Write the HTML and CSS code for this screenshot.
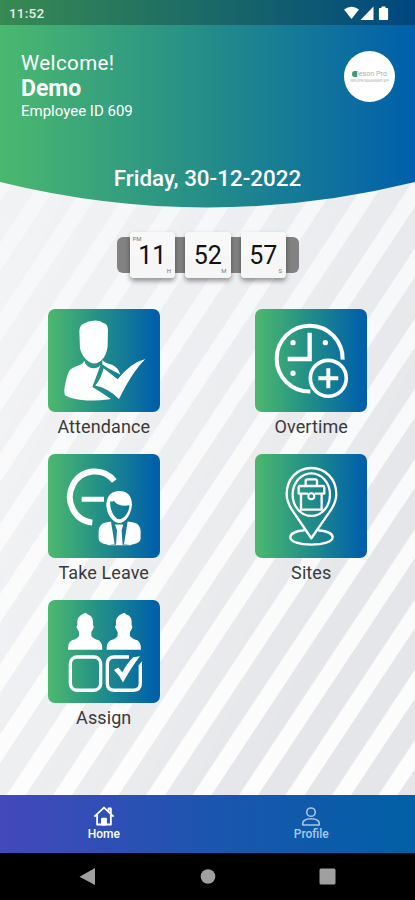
FILE: index.html
```html
<!DOCTYPE html>
<html lang="en">
<head>
<meta charset="utf-8">
<title>Home</title>
<link rel="stylesheet" href="styles.css">
</head>
<body>
<div class="app">
  <svg class="stripes" viewBox="0 0 415 795" aria-hidden="true">
    <defs>
      <pattern id="stripe" width="46.5" height="10" patternUnits="userSpaceOnUse" patternTransform="translate(26.2 794) skewX(-33.5)">
        <rect width="27.5" height="10" fill="#e4e6e9"/>
      </pattern>
      <linearGradient id="fade" x1="0" y1="0" x2="1" y2="1">
        <stop offset=".2" stop-color="#fff" stop-opacity=".3"/>
        <stop offset=".5" stop-color="#fff" stop-opacity=".6"/>
        <stop offset=".8" stop-color="#fff" stop-opacity="1"/>
      </linearGradient>
      <mask id="fadeMask"><rect width="415" height="795" fill="url(#fade)"/></mask>
      <linearGradient id="base" x1="0" y1="0" x2="0" y2="1">
        <stop offset=".25" stop-color="#f6f7f9"/>
        <stop offset="1" stop-color="#fdfdfd"/>
      </linearGradient>
    </defs>
    <rect width="415" height="795" fill="url(#base)"/>
    <rect width="415" height="795" fill="url(#stripe)" mask="url(#fadeMask)"/>
  </svg>

  <header class="header">
    <svg class="header-shape" viewBox="0 0 415 208" aria-hidden="true">
      <defs>
        <linearGradient id="head" x1="0" y1="0" x2="1" y2="0">
          <stop offset="0" stop-color="#4bb86e"/>
          <stop offset=".5" stop-color="#248d89"/>
          <stop offset="1" stop-color="#005fab"/>
        </linearGradient>
      </defs>
      <path d="M0 0H415V182Q208 233 0 182Z" fill="url(#head)"/>
    </svg>
    <div class="status">
      <span class="status-time">11:52</span>
      <svg class="status-icons" viewBox="0 0 45 15" fill="#fff" aria-hidden="true">
        <path d="M0 3.600Q7.500-2.200 15 3.600L7.500 13Z"/>
        <path d="M29.500 .6V14H16.500Z"/>
        <path d="M37.500 .5h4v1.400h1.600q1 0 1 1V13q0 1-1 1h-7.200q-1 0-1-1V2.900q0-1 1-1h1.600z"/>
      </svg>
    </div>
    <div class="intro">
      <div class="greeting">
        <div class="welcome">Welcome!</div>
        <div class="name">Demo</div>
        <div class="employee">Employee ID 609</div>
      </div>
      <div class="avatar">
        <div class="brand"><i class="brand-mark"></i>leson Pro</div>
        <div class="brand-sub">EMPLOYEE MANAGEMENT APP</div>
      </div>
    </div>
    <div class="date">Friday, 30-12-2022</div>
  </header>

  <div class="clock">
    <div class="digit"><small class="period">PM</small>11<small class="unit">H</small></div>
    <div class="digit">52<small class="unit">M</small></div>
    <div class="digit">57<small class="unit">S</small></div>
  </div>

  <main class="grid">
    <div class="item">
      <svg class="tile" viewBox="24 25 337 311" fill="#fff" aria-hidden="true">
        <path d="M161 60Q180 59 190 67Q204 70 204 88L203 138Q199 166 183 180Q163 196 145 182Q127 168 120 144L118 91Q119 72 134 68Q146 59 161 60Z"/>
        <path d="M133 180Q138 201 161 203Q176 202 182 192L157 259Q183 274 213 295Q184 300 140 300Q96 297 75 284Q70 270 77 245Q82 218 91 207Q99 199 121 192Q130 189 133 180Z"/>
        <path d="M187 178Q194 187 216 192Q236 201 241 222L203 202L187 191Z"/>
        <path d="M191 203L233 236Q271 187 316 175Q277 213 237 295Q204 263 166 255Q183 235 191 203Z"/>
      </svg>
      <span class="label">Attendance</span>
    </div>
    <div class="item">
      <svg class="tile" viewBox="22 25 337 311" fill="none" stroke="#fff" aria-hidden="true">
        <path d="M188 273A99 99 0 1 1 285 177" stroke-width="12"/>
        <path d="M186 96V175H120" stroke-width="13"/>
        <circle cx="242" cy="233" r="54" stroke-width="11"/>
        <path d="M242 203V263M212 233H272" stroke-width="12"/>
        <g fill="#fff" stroke="none"><circle cx="136" cy="126" r="8"/><circle cx="233" cy="126" r="8"/><circle cx="136" cy="218" r="8"/></g>
      </svg>
      <span class="label">Overtime</span>
    </div>
    <div class="item">
      <svg class="tile" viewBox="24 17 337 311" fill="#fff" aria-hidden="true">
        <path d="M223 98A75 77 0 1 0 157 223" fill="none" stroke="#fff" stroke-width="18"/>
        <path d="M125 145H192V160H125Z"/>
        <path fill-rule="evenodd" d="M238 128C264 128 276 145 276 170C274 197 257 224 238 224C218 224 200 197 199 170C200 143 214 128 238 128ZM211 158C207 184 225 213 238 213C252 213 269 190 268 171Q236 176 221 157Q216 162 211 158Z"/>
        <path d="M213 220L224 288H196Q176 284 176 271V247Q178 228 197 223Z"/>
        <path d="M263 220L252 288H281Q302 284 302 271V247Q300 228 281 223Z"/>
        <path d="M225 229H250L245 246L248 290H228L231 246Z"/>
        <path d="M196 286Q238 294 281 286L272 291H206Z"/>
      </svg>
      <span class="label">Take Leave</span>
    </div>
    <div class="item">
      <svg class="tile" viewBox="22 17 337 311" fill="none" stroke="#fff" stroke-width="7" stroke-linejoin="round" aria-hidden="true">
        <path d="M191 270L132 183Q117 159 117 137C117 92 149 59 191 59S266 92 266 137Q266 159 251 183Z"/>
        <ellipse cx="191" cy="139" rx="56" ry="64"/>
        <path d="M181 136H153V117Q153 113 157 113H226Q230 113 230 117V136H201"/>
        <path d="M160 138V184H222V138M174 112V98Q174 93 179 93H203Q208 93 208 98V112"/>
        <circle cx="191" cy="144" r="9" stroke-width="6"/>
        <path d="M171 246C145 248 128 256 128 267C128 281 156 289 191 289S255 281 255 267C255 256 237 248 211 246"/>
      </svg>
      <span class="label">Sites</span>
    </div>
    <div class="item">
      <svg class="tile" viewBox="24 16 337 311" fill="#fff" aria-hidden="true">
        <defs>
          <path id="person" d="M130 57L137 54L142 59Q158 64 159 80V91Q164 97 159 104L154 112V124Q160 132 176 137Q188 145 187 165H84Q83 144 96 137Q112 132 117 124V112L112 103Q107 96 112 90V79Q113 65 130 57Z"/>
        </defs>
        <use href="#person"/><use href="#person" x="116"/>
        <rect x="91" y="187" width="91" height="100" rx="20" fill="none" stroke="#fff" stroke-width="10"/>
        <path d="M267 187H223Q202 187 202 208V266Q202 287 223 287H280Q301 287 301 266V212" fill="none" stroke="#fff" stroke-width="10"/>
        <path d="M222 226L235 219L247 233Q261 206 280 188L300 185Q274 218 249 264Q240 243 222 226Z"/>
        <path d="M296 213L306 200V213Z"/>
      </svg>
      <span class="label">Assign</span>
    </div>
  </main>

  <nav class="tabs">
    <div class="tab active">
      <svg class="tab-icon" viewBox="0 0 24 22" fill="none" stroke="currentColor" stroke-width="2" stroke-linejoin="round" aria-hidden="true">
        <path d="M1.500 11.500L12 1.500L22.500 11.500M4.500 9.500V20H19.500V9.500M17 6V2.500H19.500V8.500"/>
        <path d="M9.800 20V13.500H14.200V20Z" fill="currentColor"/>
      </svg>
      <span>Home</span>
    </div>
    <div class="tab">
      <svg class="tab-icon" viewBox="0 0 24 22" fill="none" stroke="currentColor" stroke-width="1.700" stroke-linejoin="round" aria-hidden="true">
        <circle cx="12" cy="6.500" r="4.600"/>
        <path d="M3 20.500Q2 13.800 12 13.800T21 20.500Z"/>
      </svg>
      <span>Profile</span>
    </div>
  </nav>

  <div class="system">
    <svg viewBox="0 0 415 47.500" fill="#a0a0a0" aria-hidden="true">
      <path d="M95 15V32L79.500 23.700Z"/>
      <circle cx="208" cy="23.500" r="7.300"/>
      <rect x="319.500" y="15.500" width="16" height="16" rx="1.500"/>
    </svg>
  </div>
</div>
</body>
</html>
```
FILE: styles.css
```css
* {
  box-sizing: border-box;
}

body {
  margin: 0;
  font-family: Roboto, "Liberation Sans", sans-serif;
  background: #fff;
}

.app {
  position: relative;
  display: flex;
  flex-direction: column;
  width: 415px;
  height: 900px;
  overflow: hidden;
}

.stripes {
  position: absolute;
  top: 0;
  left: 0;
  z-index: -1;
  width: 415px;
  height: 795px;
}

.header {
  position: relative;
  flex: none;
  height: 208px;
  color: #fff;
}

.header-shape {
  position: absolute;
  top: 0;
  left: 0;
  z-index: -1;
  width: 415px;
  height: 208px;
}

.status {
  display: flex;
  justify-content: space-between;
  align-items: center;
  height: 24.500px;
  padding: 2px 26.500px 0 9px;
  background: rgba(0, 0, 0, .25);
}

.status-time {
  font-size: 13.500px;
  font-weight: 500;
  letter-spacing: .2px;
  color: #e6eeea;
}

.status-icons {
  width: 45px;
  height: 15px;
}

.intro {
  display: flex;
  justify-content: space-between;
  height: 138px;
  padding: 26px 20px 0 21px;
}

.welcome {
  font-size: 20.500px;
  line-height: 25px;
  letter-spacing: .4px;
}

.name {
  font-size: 23px;
  font-weight: 700;
  line-height: 25px;
}

.employee {
  font-size: 15px;
  line-height: 21px;
}

.avatar {
  display: flex;
  flex-direction: column;
  align-items: center;
  width: 51px;
  height: 51px;
  padding-top: 19px;
  border-radius: 50%;
  background: #fff;
}

.brand {
  display: flex;
  align-items: center;
  font-size: 7px;
  line-height: 9px;
  letter-spacing: .1px;
  color: #a6b0b0;
}

.brand-mark {
  width: 5px;
  height: 6px;
  border-radius: 50% 0 0 50%;
  background: #429878;
}

.brand-sub {
  font-size: 2.700px;
  line-height: 4px;
  color: #a8b2b8;
}

.date {
  text-align: center;
  font-size: 22.400px;
  font-weight: 500;
  line-height: 30px;
}

.clock {
  display: flex;
  justify-content: space-between;
  align-items: center;
  align-self: center;
  width: 182px;
  height: 36px;
  margin-top: 29px;
  padding: 0 12.500px 0 13px;
  border-radius: 6px;
  background: #828282;
}

.digit {
  position: relative;
  flex: none;
  width: 45.500px;
  height: 46px;
  border-radius: 4px;
  text-align: center;
  font-size: 25px;
  line-height: 48px;
  color: #111;
  background: linear-gradient(#f8f8f8 49%, #d4d4d4 49%, #d4d4d4 51%, #f6f6f6 51%);
  box-shadow: 0 3px 5px rgba(0, 0, 0, .4);
}

.period,
.unit {
  position: absolute;
  font-size: 6px;
  line-height: 7px;
  color: #777;
}

.period {
  top: 3px;
  left: 3px;
}

.unit {
  right: 4px;
  bottom: 4px;
}

.grid {
  display: grid;
  grid-template-columns: 207.500px 207.500px;
  grid-auto-rows: 145.500px;
  align-content: start;
  height: 486.500px;
  margin-top: 35.500px;
}

.item {
  display: flex;
  flex-direction: column;
  align-items: center;
}

.tile {
  width: 112.300px;
  height: 103.600px;
  border-radius: 7px;
  background: linear-gradient(90deg, #4ab76e 2%, #239087 46%, #0060aa 96%);
}

.label {
  margin-top: 3px;
  font-size: 18px;
  line-height: 24px;
  letter-spacing: .1px;
  color: #3a3a3a;
}

.tabs {
  display: flex;
  flex: none;
  height: 57.500px;
  background: linear-gradient(90deg, #4448bb, #1c55b0 50%, #0060a5);
}

.tab {
  display: flex;
  flex: 1;
  flex-direction: column;
  align-items: center;
  padding-top: 10.500px;
  font-size: 12px;
  font-weight: 500;
  line-height: 17px;
  color: #a9c6e8;
}

.active {
  color: #fff;
}

.tab-icon {
  width: 22px;
  height: 20.500px;
}

.system {
  flex: 1;
  background: #000;
}

.system svg {
  display: block;
  width: 415px;
  height: 47.500px;
}
```
